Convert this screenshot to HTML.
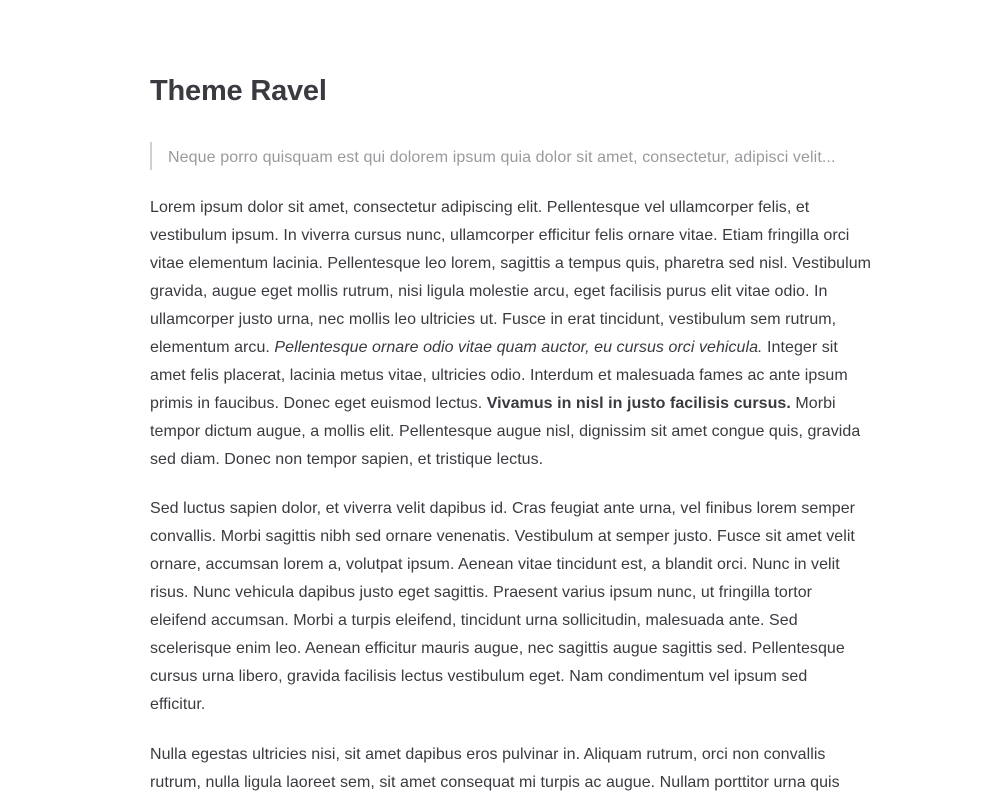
<!DOCTYPE html>
<html><head><meta charset="utf-8"><style>
body{margin:0;background:#fff;font-family:"Liberation Sans",Arial,sans-serif;color:#3a3a40;}
.c{position:absolute;left:150px;top:0;width:760px;}
h1{position:absolute;top:73px;left:0;margin:0;font-size:29px;font-weight:bold;line-height:36px;color:#3a3a40;white-space:nowrap;letter-spacing:-0.2px;}
.bq{position:absolute;top:142px;left:0;height:28px;border-left:2px solid #d0d0d0;padding-left:16px;font-size:16px;line-height:28px;color:#9a9a9e;white-space:nowrap;}
.bq span{position:relative;top:2px;letter-spacing:0.1px;}
.p{position:absolute;left:0;font-size:16px;line-height:28px;white-space:nowrap;margin:0;letter-spacing:0.05px;}
</style></head><body><div class="c">
<h1>Theme Ravel</h1>
<div class="bq"><span>Neque porro quisquam est qui dolorem ipsum quia dolor sit amet, consectetur, adipisci velit...</span></div>
<p class="p" style="top:194px">Lorem ipsum dolor sit amet, consectetur adipiscing elit. Pellentesque vel ullamcorper felis, et<br>vestibulum ipsum. In viverra cursus nunc, ullamcorper efficitur felis ornare vitae. Etiam fringilla orci<br>vitae elementum lacinia. Pellentesque leo lorem, sagittis a tempus quis, pharetra sed nisl. Vestibulum<br>gravida, augue eget mollis rutrum, nisi ligula molestie arcu, eget facilisis purus elit vitae odio. In<br>ullamcorper justo urna, nec mollis leo ultricies ut. Fusce in erat tincidunt, vestibulum sem rutrum,<br>elementum arcu. <i>Pellentesque ornare odio vitae quam auctor, eu cursus orci vehicula.</i> Integer sit<br>amet felis placerat, lacinia metus vitae, ultricies odio. Interdum et malesuada fames ac ante ipsum<br>primis in faucibus. Donec eget euismod lectus. <b>Vivamus in nisl in justo facilisis cursus.</b> Morbi<br>tempor dictum augue, a mollis elit. Pellentesque augue nisl, dignissim sit amet congue quis, gravida<br>sed diam. Donec non tempor sapien, et tristique lectus.</p>
<p class="p" style="top:495px">Sed luctus sapien dolor, et viverra velit dapibus id. Cras feugiat ante urna, vel finibus lorem semper<br>convallis. Morbi sagittis nibh sed ornare venenatis. Vestibulum at semper justo. Fusce sit amet velit<br>ornare, accumsan lorem a, volutpat ipsum. Aenean vitae tincidunt est, a blandit orci. Nunc in velit<br>risus. Nunc vehicula dapibus justo eget sagittis. Praesent varius ipsum nunc, ut fringilla tortor<br>eleifend accumsan. Morbi a turpis eleifend, tincidunt urna sollicitudin, malesuada ante. Sed<br>scelerisque enim leo. Aenean efficitur mauris augue, nec sagittis augue sagittis sed. Pellentesque<br>cursus urna libero, gravida facilisis lectus vestibulum eget. Nam condimentum vel ipsum sed<br>efficitur.</p>
<p class="p" style="top:741px">Nulla egestas ultricies nisi, sit amet dapibus eros pulvinar in. Aliquam rutrum, orci non convallis<br>rutrum, nulla ligula laoreet sem, sit amet consequat mi turpis ac augue. Nullam porttitor urna quis</p>
</div></body></html>
